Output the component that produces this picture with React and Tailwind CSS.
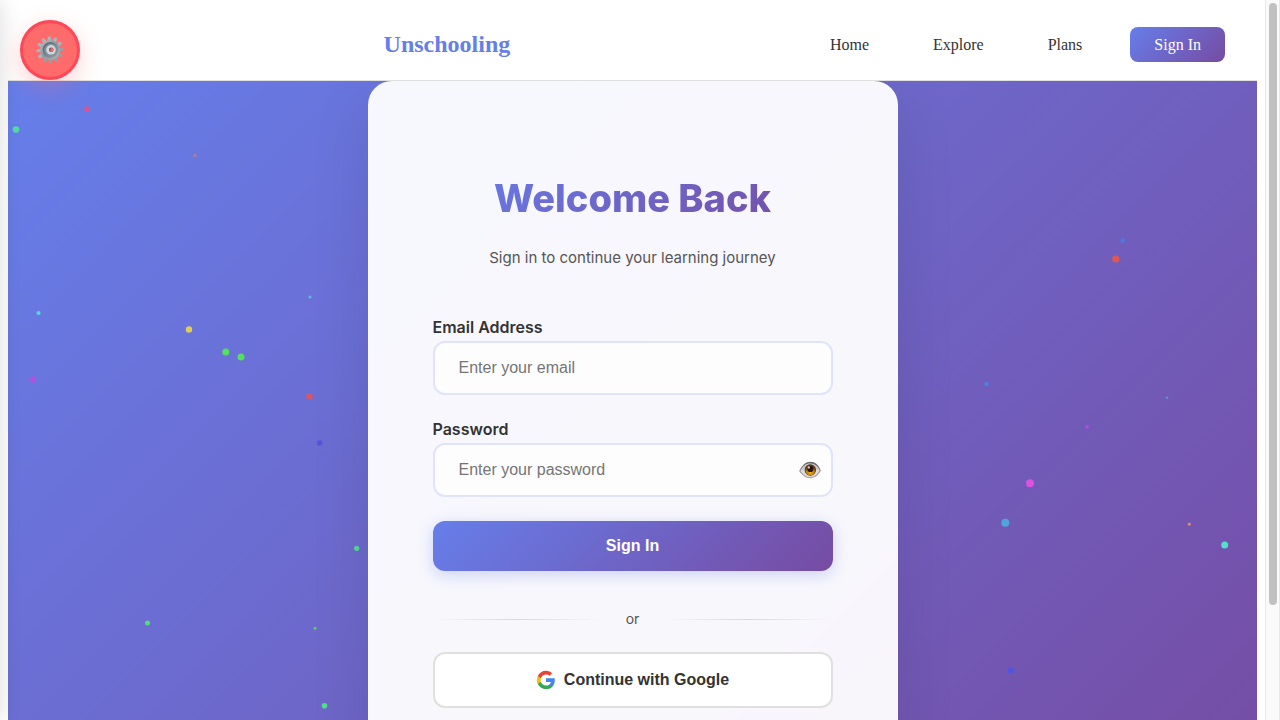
import { useState } from "react";

const particles = [
  { x: 8, y: 48.5, r: 3.3, c: "#52dca5" },
  { x: 79, y: 28, r: 2.8, c: "#d9558f" },
  { x: 187, y: 74.5, r: 1.8, c: "#a87f9c" },
  { x: 302, y: 216, r: 1.5, c: "#55c4cf" },
  { x: 30.5, y: 232, r: 2.1, c: "#55d6dd" },
  { x: 181, y: 248.5, r: 3.2, c: "#dfcd55" },
  { x: 217.8, y: 271, r: 3.5, c: "#55e05c" },
  { x: 233, y: 276, r: 3.5, c: "#55e05c" },
  { x: 25, y: 298.5, r: 3.3, c: "#ac54dd" },
  { x: 301.5, y: 315.5, r: 3.2, c: "#dc5560" },
  { x: 311.7, y: 362, r: 2.8, c: "#5555df" },
  { x: 348.7, y: 467.3, r: 2.6, c: "#52d992" },
  { x: 139.5, y: 542, r: 2.5, c: "#52dc7c" },
  { x: 307, y: 547.3, r: 1.5, c: "#6bc76a" },
  { x: 316.5, y: 624.7, r: 2.8, c: "#52de8e" },
  { x: 1114.7, y: 159.5, r: 2.3, c: "#4f78df" },
  { x: 1107.8, y: 178, r: 3.6, c: "#e0574f" },
  { x: 978.5, y: 303, r: 2.2, c: "#4f80dc" },
  { x: 1159, y: 316.7, r: 1.3, c: "#5694d2" },
  { x: 1079, y: 345.7, r: 2, c: "#a94fd8" },
  { x: 1022, y: 402.3, r: 4, c: "#dc52de" },
  { x: 997.3, y: 441.7, r: 4, c: "#52a4dd" },
  { x: 1181.3, y: 443.2, r: 1.6, c: "#cf8c72" },
  { x: 1216.7, y: 464, r: 3.5, c: "#52e0cc" },
  { x: 1003, y: 589.5, r: 3.2, c: "#5255dd" },
];

const teeth = [0, 30, 60, 90, 120, 150, 180, 210, 240, 270, 300, 330];

function GearIcon() {
  return (
    <svg viewBox="0 0 28 28" className="size-7" aria-hidden="true">
      <defs>
        <linearGradient id="gearBody" x1="0" y1="0" x2="1" y2="1">
          <stop offset="0" stopColor="#b4bfc5" />
          <stop offset="0.5" stopColor="#8b979e" />
          <stop offset="1" stopColor="#b3b9bd" />
        </linearGradient>
        <linearGradient id="gearDish" x1="0" y1="0" x2="1" y2="1">
          <stop offset="0" stopColor="#56636a" />
          <stop offset="1" stopColor="#94a0a6" />
        </linearGradient>
      </defs>
      {teeth.map((a) => (
        <path
          key={a}
          d="M11.8 6 L12.6 0.7 Q14 -0.3 15.3 0.7 L16.2 6 Z"
          fill={a > 60 && a < 240 ? "#989ea3" : "#a9b5bc"}
          transform={`rotate(${a - 3} 14 14)`}
        />
      ))}
      <circle cx="14" cy="14" r="10" fill="url(#gearBody)" />
      <circle cx="14.3" cy="13.9" r="7.8" fill="url(#gearDish)" />
      <circle cx="14.7" cy="14.1" r="6.3" fill="#84929a" />
      <circle cx="15" cy="13.8" r="4.8" fill="#cfd8dc" />
      <circle cx="15.3" cy="13.7" r="2.3" fill="#6a5054" />
      <ellipse cx="15.8" cy="13.9" rx="1.4" ry="1.9" fill="#ff6b6b" />
    </svg>
  );
}

function EyeIcon() {
  return (
    <svg viewBox="0 0 22 18" className="h-[18px] w-[22px]" aria-hidden="true">
      <defs>
        <radialGradient id="iris" cx="0.5" cy="0.75" r="0.6">
          <stop offset="0" stopColor="#eab01c" />
          <stop offset="0.65" stopColor="#b57c0e" />
          <stop offset="1" stopColor="#5a3812" />
        </radialGradient>
        <linearGradient id="lid" x1="0" y1="0" x2="0" y2="1">
          <stop offset="0" stopColor="#66676c" />
          <stop offset="1" stopColor="#b5a6aa" />
        </linearGradient>
      </defs>
      <path
        d="M0.2 10 C3 4 7 0.8 11.3 0.8 C16 0.8 19.8 4.2 21.8 9.4 C18.8 15 15.4 17.2 11 17.2 C6.6 17.2 3.4 14.6 0.2 10 Z"
        fill="url(#lid)"
      />
      <path
        d="M1.4 10 C4 5 7 2.4 11.2 2.4 C15.6 2.4 18.8 5.4 20.6 9.4 C18 14 15 16.1 11 16.1 C7 16.1 4 13.8 1.4 10 Z"
        fill="#dcdadf"
      />
      <path d="M3.4 8.6 C5.4 5.6 8 3.8 11.2 3.8 C14.8 3.8 17.2 6 18.8 8.8" fill="none" stroke="#a9a6ac" strokeWidth="0.8" />
      <circle cx="11.3" cy="9" r="5.7" fill="#5a3812" />
      <circle cx="11.3" cy="9.1" r="5.2" fill="url(#iris)" />
      <circle cx="11.3" cy="8" r="3.1" fill="#2b1410" />
      <circle cx="9.8" cy="6.4" r="1.2" fill="#d8cfd4" />
    </svg>
  );
}

function GoogleIcon() {
  return (
    <svg viewBox="0 0 24 24" className="size-5" aria-hidden="true">
      <path fill="#4285F4" d="M22.56 12.25c0-.78-.07-1.53-.2-2.25H12v4.26h5.92c-.26 1.37-1.04 2.53-2.21 3.31v2.77h3.57c2.08-1.92 3.28-4.74 3.28-8.09z" />
      <path fill="#34A853" d="M12 23c2.97 0 5.46-.98 7.28-2.66l-3.57-2.77c-.98.66-2.23 1.06-3.71 1.06-2.86 0-5.29-1.93-6.16-4.53H2.18v2.84C3.99 20.53 7.7 23 12 23z" />
      <path fill="#FBBC05" d="M5.84 14.09c-.22-.66-.35-1.36-.35-2.09s.13-1.43.35-2.09V7.07H2.18C1.43 8.55 1 10.22 1 12s.43 3.45 1.18 4.93l3.66-2.84z" />
      <path fill="#EA4335" d="M12 5.38c1.62 0 3.06.56 4.21 1.64l3.15-3.15C17.45 2.09 14.97 1 12 1 7.7 1 3.99 3.47 2.18 7.07l3.66 2.84c.87-2.6 3.3-4.53 6.16-4.53z" />
    </svg>
  );
}

function Header() {
  return (
    <header className="flex h-[81px] items-center justify-between border-b border-[#e0e0e0] bg-white px-8 pt-2 font-['Liberation_Serif',serif]">
      <div className="w-10" />
      <a href="#" className="text-2xl font-bold text-[#667eea]">Unschooling</a>
      <nav className="flex items-center gap-8 text-base leading-[18px] text-[#333]">
        <a href="#" className="px-4 pt-[9px] pb-2">Home</a>
        <a href="#" className="px-4 pt-[9px] pb-2">Explore</a>
        <a href="#" className="px-4 pt-[9px] pb-2">Plans</a>
        <a href="#" className="rounded-lg bg-[linear-gradient(135deg,#667eea,#764ba2)] px-6 pt-[9px] pb-2 text-white">Sign In</a>
      </nav>
    </header>
  );
}

const field =
  "h-[54px] w-full rounded-xl border-2 border-[#e0e4fb] bg-[#fdfdfe] px-6 font-['Liberation_Sans',Arial,sans-serif] text-base text-[#333] outline-none placeholder:text-[#757575]";

function LoginCard() {
  const [visible, setVisible] = useState(false);
  return (
    <section className="relative w-full max-w-[530px] rounded-3xl border border-white/20 bg-white/95 px-16 pt-[92px] pb-16 font-[Inter,sans-serif] shadow-[0_20px_60px_rgba(0,0,0,0.1)]">
      <div className="flex flex-col gap-6 pb-[47px] text-center">
        <h1 className="bg-[linear-gradient(135deg,#667eea,#764ba2)] bg-clip-text text-[38px] leading-[48px] font-extrabold text-transparent">Welcome Back</h1>
        <p className="text-[15px] leading-6 text-[#555]">Sign in to continue your learning journey</p>
      </div>
      <form className="flex flex-col gap-6" onSubmit={(e) => e.preventDefault()}>
        <div className="flex flex-col gap-1">
          <label htmlFor="email" className="text-base leading-5 font-semibold text-[#333]">Email Address</label>
          <input id="email" type="email" placeholder="Enter your email" className={field} />
        </div>
        <div className="flex flex-col gap-1">
          <label htmlFor="password" className="text-base leading-5 font-semibold text-[#333]">Password</label>
          <div className="relative">
            <input id="password" type={visible ? "text" : "password"} placeholder="Enter your password" className={field} />
            <button type="button" aria-label="Show password" onClick={() => setVisible(!visible)} className="absolute inset-y-0 right-3 flex items-center">
              <EyeIcon />
            </button>
          </div>
        </div>
        <button type="submit" className="h-[50px] rounded-xl bg-[linear-gradient(135deg,#667eea,#764ba2)] font-['Liberation_Sans',Arial,sans-serif] text-base font-bold text-white shadow-[0_4px_15px_rgba(102,126,234,0.3)]">Sign In</button>
      </form>
      <div className="flex items-center gap-6 pt-[38px] pb-[23px] text-sm leading-5 text-[#555]">
        <div className="h-px flex-1 bg-[linear-gradient(90deg,transparent,#d8d8d8,transparent)]" />
        <span>or</span>
        <div className="h-px flex-1 bg-[linear-gradient(90deg,transparent,#d8d8d8,transparent)]" />
      </div>
      <button type="button" className="flex h-14 w-full items-center justify-center gap-2 rounded-xl border-2 border-[#e0e0e0] bg-white font-['Liberation_Sans',Arial,sans-serif] text-base font-bold text-[#333]">
        <GoogleIcon />
        Continue with Google
      </button>
    </section>
  );
}

export default function App() {
  return (
    <div className="relative flex h-screen overflow-hidden bg-white">
      <div className="min-w-0 flex-1 overflow-y-auto px-2 [scrollbar-width:none]">
        <Header />
        <main className="relative flex min-h-[766px] justify-center overflow-hidden bg-[linear-gradient(135deg,#667eea_0%,#764ba2_100%)]">
          <svg className="absolute inset-0 size-full" aria-hidden="true">
            {particles.map((p) => (
              <circle key={`${p.x}-${p.y}`} cx={p.x} cy={p.y} r={p.r} fill={p.c} />
            ))}
          </svg>
          <LoginCard />
        </main>
      </div>
      <div className="flex w-[15px] shrink-0 justify-center border-x border-[#e8e8e8] bg-[#fafafa] pt-[3px]" aria-hidden="true">
        <div className="h-[84%] w-2 rounded-full bg-[#c1c1c1]" />
      </div>
      <div className="absolute inset-y-0 -left-5 w-5 shadow-[2px_0_20px_rgba(0,0,0,0.12)]" />
      <button type="button" aria-label="Settings" className="absolute top-5 left-5 flex size-[60px] items-center justify-center rounded-full border-3 border-[#ff4757] bg-[#ff6b6b] shadow-[0_8px_25px_rgba(255,107,107,0.3)]">
        <GearIcon />
      </button>
    </div>
  );
}
